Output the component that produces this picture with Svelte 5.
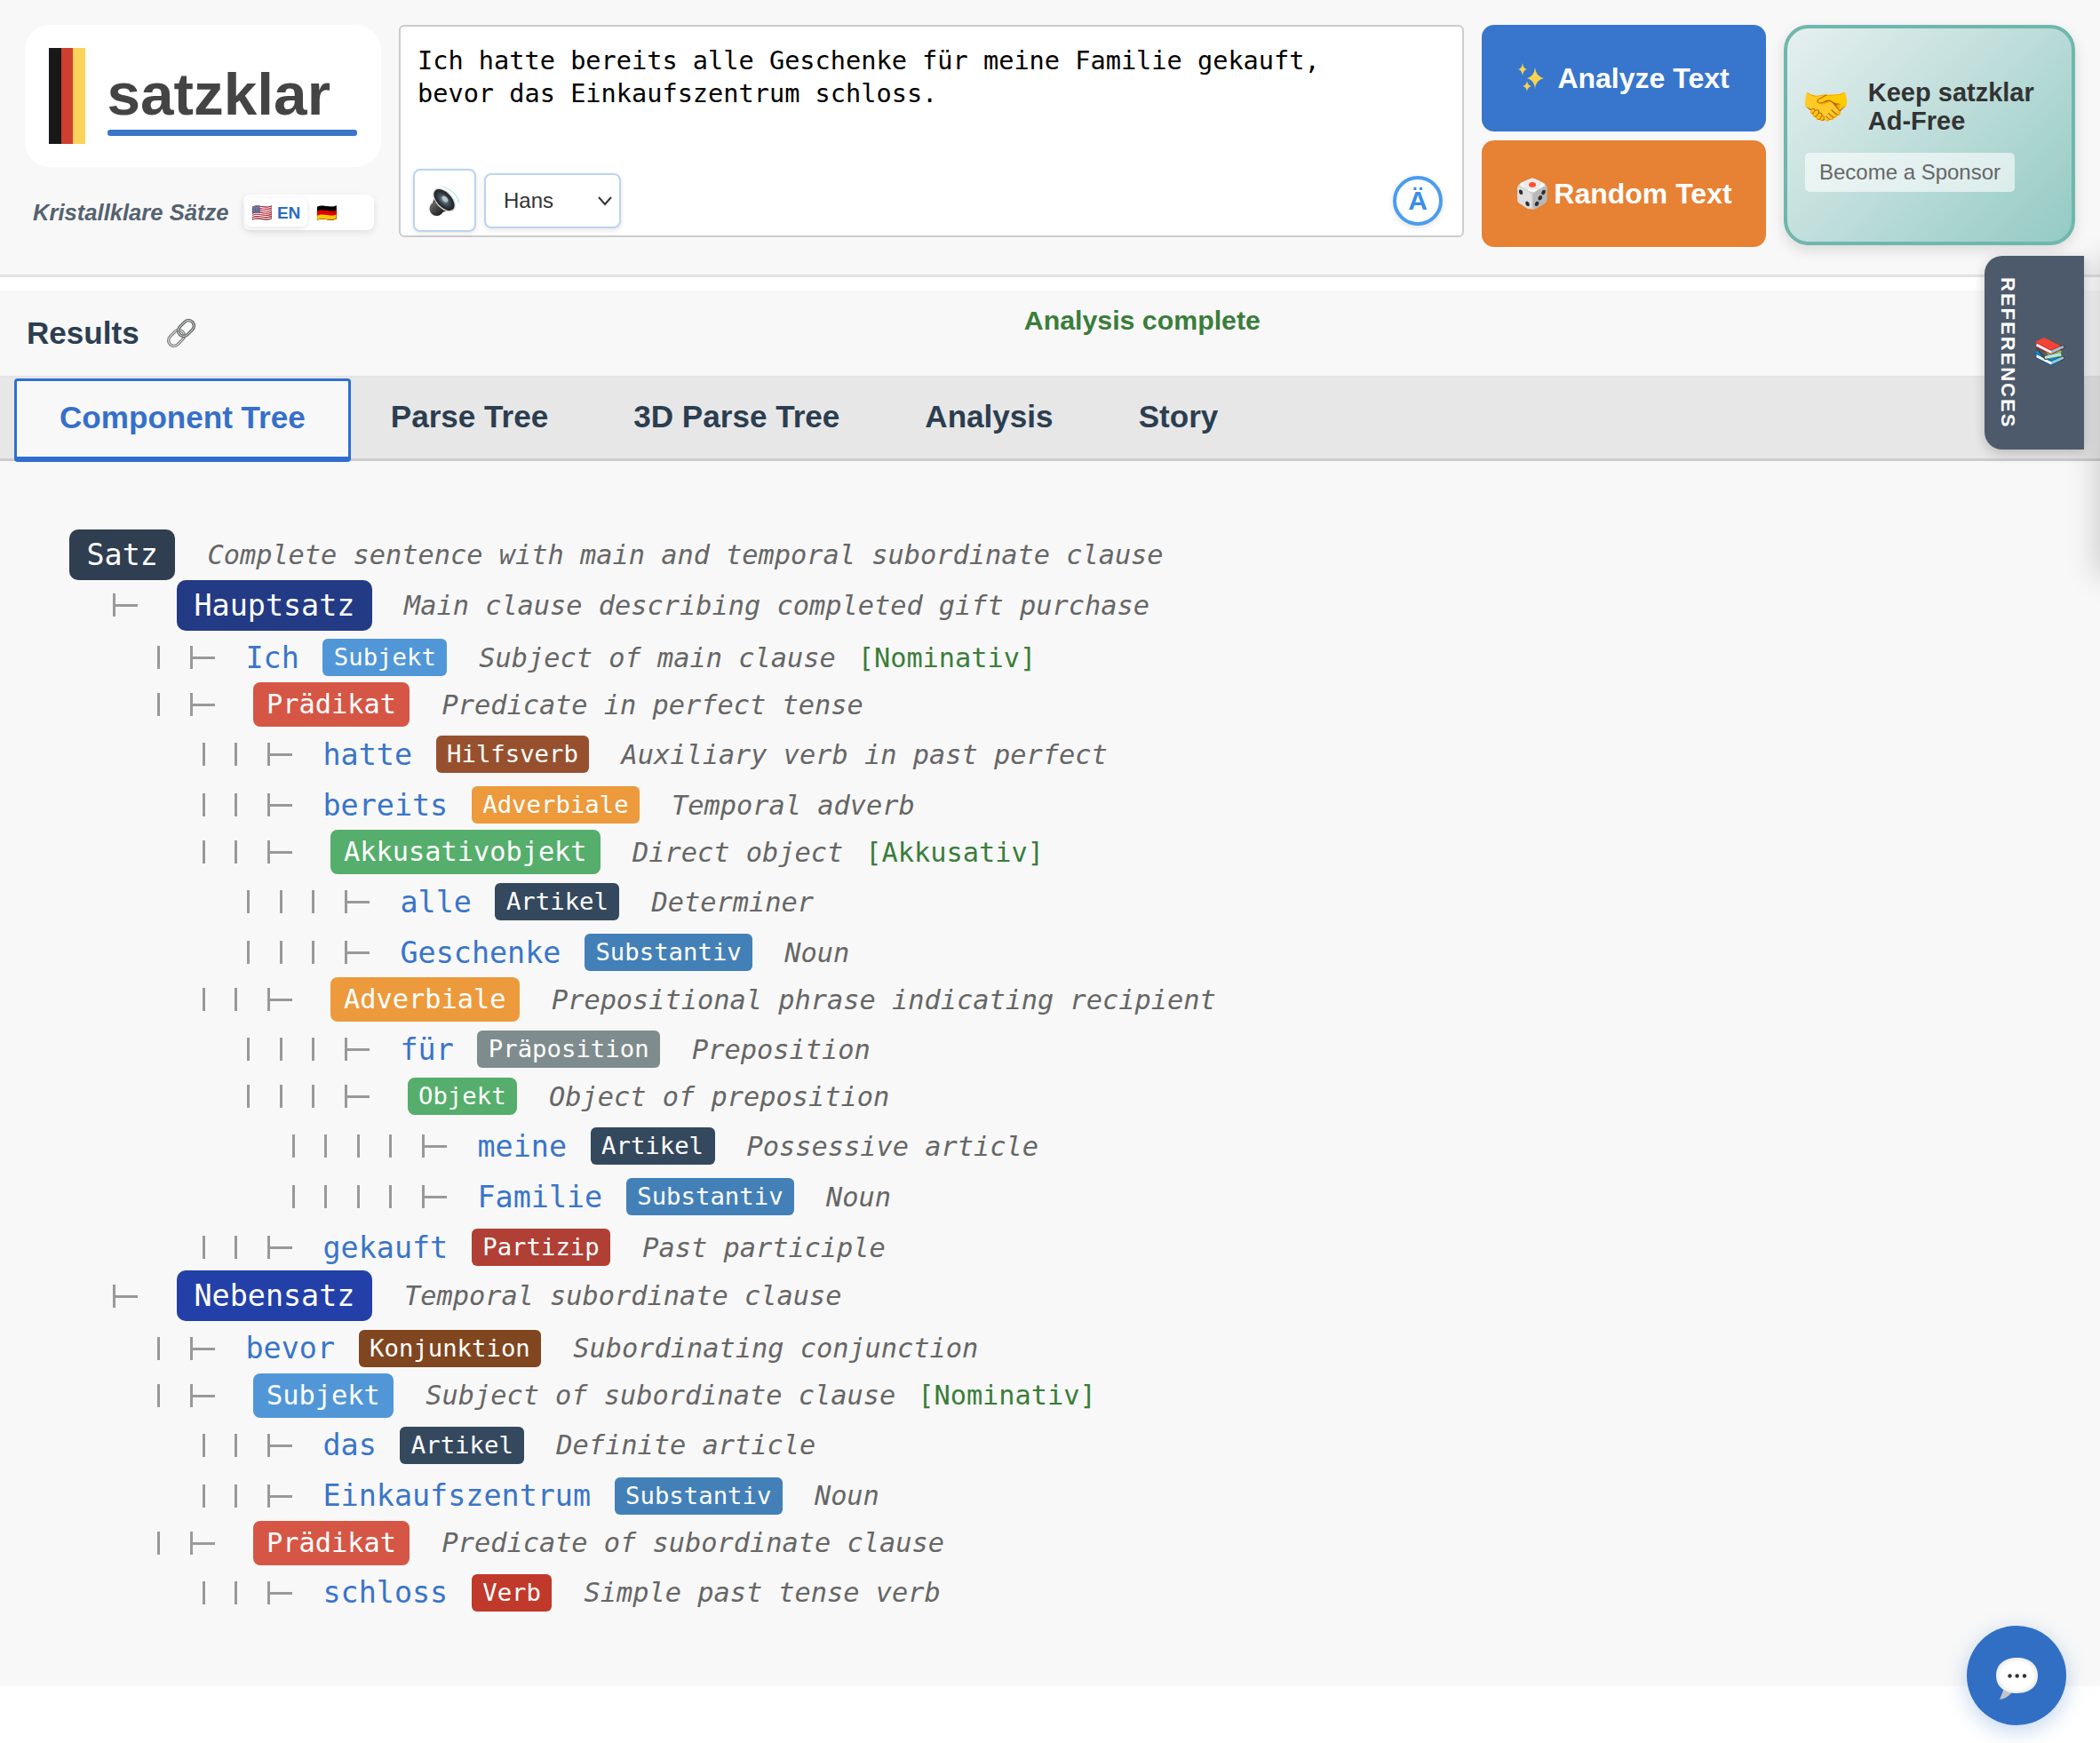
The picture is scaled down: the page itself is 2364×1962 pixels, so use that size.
<script>
  const rows = [
    { d: 0, kind: "big", badge: "Satz", color: "satz", desc: "Complete sentence with main and temporal subordinate clause" },
    { d: 1, kind: "big", badge: "Hauptsatz", color: "haupt", desc: "Main clause describing completed gift purchase" },
    { d: 2, word: "Ich", badge: "Subjekt", color: "subj", desc: "Subject of main clause", tag: "[Nominativ]" },
    { d: 2, kind: "phrase", badge: "Prädikat", color: "praed", desc: "Predicate in perfect tense" },
    { d: 3, word: "hatte", badge: "Hilfsverb", color: "hilf", desc: "Auxiliary verb in past perfect" },
    { d: 3, word: "bereits", badge: "Adverbiale", color: "adv", desc: "Temporal adverb" },
    { d: 3, kind: "phrase", badge: "Akkusativobjekt", color: "obj", desc: "Direct object", tag: "[Akkusativ]" },
    { d: 4, word: "alle", badge: "Artikel", color: "art", desc: "Determiner" },
    { d: 4, word: "Geschenke", badge: "Substantiv", color: "subst", desc: "Noun" },
    { d: 3, kind: "phrase", badge: "Adverbiale", color: "adv", desc: "Prepositional phrase indicating recipient" },
    { d: 4, word: "für", badge: "Präposition", color: "prep", desc: "Preposition" },
    { d: 4, kind: "phrase", small: true, badge: "Objekt", color: "obj", desc: "Object of preposition" },
    { d: 5, word: "meine", badge: "Artikel", color: "art", desc: "Possessive article" },
    { d: 5, word: "Familie", badge: "Substantiv", color: "subst", desc: "Noun" },
    { d: 3, word: "gekauft", badge: "Partizip", color: "part", desc: "Past participle" },
    { d: 1, kind: "big", badge: "Nebensatz", color: "neben", desc: "Temporal subordinate clause" },
    { d: 2, word: "bevor", badge: "Konjunktion", color: "konj", desc: "Subordinating conjunction" },
    { d: 2, kind: "phrase", badge: "Subjekt", color: "subj", desc: "Subject of subordinate clause", tag: "[Nominativ]" },
    { d: 3, word: "das", badge: "Artikel", color: "art", desc: "Definite article" },
    { d: 3, word: "Einkaufszentrum", badge: "Substantiv", color: "subst", desc: "Noun" },
    { d: 2, kind: "phrase", badge: "Prädikat", color: "praed", desc: "Predicate of subordinate clause" },
    { d: 3, word: "schloss", badge: "Verb", color: "verb", desc: "Simple past tense verb" },
  ];

  const tabs = ["Component Tree", "Parse Tree", "3D Parse Tree", "Analysis", "Story"];
  let activeTab = $state(0);
  let text = $state("Ich hatte bereits alle Geschenke für meine Familie gekauft,\nbevor das Einkaufszentrum schloss.");
  let voice = $state("Hans");
</script>

<div class="page">
  <header class="top">
    <div class="brand">
      <div class="logo">
        <div class="flag"><i class="black"></i><i class="red"></i><i class="gold"></i></div>
        <div class="wordmark">
          <span>satzklar</span>
          <div class="underline"></div>
        </div>
      </div>
      <div class="brand-row">
        <span class="tagline">Kristallklare Sätze</span>
        <div class="lang">
          <button class="lang-btn active"><span class="emoji">🇺🇸</span> EN</button>
          <button class="lang-btn"><span class="emoji">🇩🇪</span></button>
        </div>
      </div>
    </div>

    <div class="input-box">
      <textarea bind:value={text} spellcheck="false"></textarea>
      <div class="tools">
        <button class="speak" aria-label="Read aloud">
          <svg width="36" height="36" viewBox="0 0 36 36">
            <defs>
              <linearGradient id="magnet" x1="0" y1="0" x2="1" y2="1">
                <stop offset="0" stop-color="#777" />
                <stop offset="1" stop-color="#111" />
              </linearGradient>
              <radialGradient id="dish">
                <stop offset="0" stop-color="#8fa6b2" />
                <stop offset="0.55" stop-color="#39444c" />
                <stop offset="1" stop-color="#1c1f22" />
              </radialGradient>
            </defs>
            <path d="M16 2.5q9 2.5 14.5 9.5 3 4 2.5 8" fill="none" stroke="#a8e4ef" stroke-width="1" />
            <path d="M12.5 1q11 3 18 12 3.5 4.5 4 9" fill="none" stroke="#c4eef5" stroke-width="0.8" />
            <path d="M4 20 9 8 25 27 13 32Z" fill="#3a3d40" />
            <circle cx="8.5" cy="27" r="8" fill="url(#magnet)" />
            <ellipse cx="17" cy="17" rx="16" ry="9.5" transform="rotate(47 17 17)" fill="#d5d8da" />
            <ellipse cx="17" cy="17" rx="14.5" ry="8.2" transform="rotate(47 17 17)" fill="url(#dish)" />
            <ellipse cx="18" cy="16" rx="4" ry="2.6" transform="rotate(47 18 16)" fill="#b7c7cf" />
          </svg>
        </button>
        <select bind:value={voice}>
          <option>Hans</option>
          <option>Marlene</option>
        </select>
        <button class="umlaut">Ä</button>
      </div>
    </div>

    <div class="actions">
      <button class="action analyze">
        <svg width="32" height="36" viewBox="0 0 32 36">
          <g fill="#fbd24e">
            <path d="M21 6q1 10 10 12-9 2-10 12-1-10-9-12 8-2 9-12Z" />
            <path d="M7 1q.6 6 5 7-4.4 1-5 7-.6-6-5-7 4.4-1 5-7Z" />
            <path d="M12 21q.5 5 5 6-4.500 1-5 6-.5-5-5-6 4.500-1 5-6Z" />
          </g>
        </svg>
        <span>Analyze Text</span>
      </button>
      <button class="action random"><span class="emoji">🎲</span><span>Random Text</span></button>
    </div>

    <div class="sponsor">
      <div class="sponsor-head">
        <span class="emoji shake">🤝</span>
        <strong>Keep satzklar<br />Ad-Free</strong>
      </div>
      <button class="sponsor-btn">Become a Sponsor</button>
    </div>
  </header>

  <main>
    <div class="results-head">
      <div class="results-title">
        Results
        <svg class="link" width="40" height="40" viewBox="0 0 36 36">
          <g fill="none" transform="rotate(-45 18 18)">
            <rect x="2" y="12.500" width="18" height="11" rx="5.500" stroke="#777" stroke-width="3" />
            <rect x="2" y="12.500" width="18" height="11" rx="5.500" stroke="#dfe3e6" stroke-width="1" />
            <rect x="16" y="12.500" width="18" height="11" rx="5.500" stroke="#555" stroke-width="3" />
            <rect x="16" y="12.500" width="18" height="11" rx="5.500" stroke="#d3d6d8" stroke-width="1" />
          </g>
        </svg>
      </div>
      <div class="status">Analysis complete</div>
    </div>

    <nav class="tabs">
      {#each tabs as tab, i}
        <button class="tab" class:active={activeTab === i} onclick={() => (activeTab = i)}>{tab}</button>
      {/each}
    </nav>

    <div class="tree">
      {#each rows as row}
        <div class="row {row.kind || 'word'}" style={row.d ? `padding-left: ${118.5 + 50.5 * (row.d - 1)}px` : "padding-left: 78px"}>
          {#if row.d}
            {#each Array(row.d - 1) as _}<span class="guide bar"></span>{/each}
            <span class="guide tee"></span>
            <span class="guide"></span>
          {/if}
          {#if row.word}<span class="token">{row.word}</span>{/if}
          <span class="badge {row.color}" class:small={row.small}>{row.badge}</span>
          <span class="desc">{row.desc}</span>
          {#if row.tag}<span class="case">{row.tag}</span>{/if}
        </div>
      {/each}
    </div>
  </main>

  <div class="drawer"></div>
  <button class="refs"><span class="emoji">📚</span><span>REFERENCES</span></button>
  <button class="chat" aria-label="Chat">
    <svg width="47" height="48" viewBox="0 0 47 48">
      <defs>
        <radialGradient id="bubble" r="0.62">
          <stop offset="0.6" stop-color="#fff" />
          <stop offset="0.88" stop-color="#e6e6e6" />
          <stop offset="1" stop-color="#a9a9a9" />
        </radialGradient>
      </defs>
      <path d="M10 32 4 47q8-1 14-8Z" fill="#c4c4c4" />
      <path d="M23.500 0C37 0 47 7 47 20S37 40 23.500 40 0 33 0 20 10 0 23.500 0Z" fill="url(#bubble)" />
      <circle cx="15.500" cy="20.500" r="2.200" fill="#333" />
      <circle cx="23.700" cy="20.500" r="2.200" fill="#333" />
      <circle cx="32" cy="20.500" r="2.200" fill="#333" />
    </svg>
  </button>
</div>

<style>
  :global(body) {
    margin: 0;
    background: #fff;
    font-family: "Liberation Sans", Arial, sans-serif;
  }

  button {
    font-family: inherit;
    cursor: pointer;
  }

  .emoji {
    font-family: "Noto Color Emoji", "Apple Color Emoji", sans-serif;
  }

  .page {
    position: relative;
    min-height: 1962px;
    overflow: hidden;
  }

  .top {
    display: flex;
    align-items: flex-start;
    gap: 20px;
    height: 281px;
    padding: 28px 28px 0;
    background: #f8f8f8;
    border-bottom: 3px solid #e2e2e2;
  }

  .brand {
    width: 401px;
    flex-shrink: 0;
  }

  .logo {
    display: flex;
    align-items: flex-start;
    gap: 25px;
    height: 160px;
    padding: 26px 27px 0;
    box-sizing: border-box;
    background: #fff;
    border-radius: 28px;
  }

  .flag {
    display: flex;
    height: 108px;
  }

  .flag i {
    width: 13.5px;
  }

  .black { background: #181818; }
  .red { background: #cf3f30; }
  .gold { background: #fbd25a; }

  .wordmark {
    flex: 1;
    color: #444;
    font-size: 67.5px;
    font-weight: 700;
    line-height: 1;
    padding-top: 19px;
  }

  .wordmark span {
    display: block;
    line-height: 66px;
  }

  .underline {
    height: 7px;
    margin-top: 7px;
    background: #3a75c9;
    border-radius: 3px;
  }

  .brand-row {
    display: flex;
    align-items: center;
    justify-content: space-between;
    margin-top: 31px;
    padding: 0 8px 0 9px;
  }

  .tagline {
    color: #556270;
    font-size: 25.6px;
    font-weight: 700;
    font-style: italic;
    white-space: nowrap;
  }

  .lang {
    display: flex;
    gap: 4px;
    width: 147px;
    height: 40px;
    padding: 4px 2px;
    box-sizing: border-box;
    background: #fff;
    border-radius: 8px;
    box-shadow: 0 3px 8px rgba(0, 0, 0, 0.1);
  }

  .lang-btn {
    width: 71px;
    border: 0;
    border-radius: 7px;
    background: transparent;
    color: #2b6cc4;
    font-size: 19px;
    font-weight: 700;
    white-space: nowrap;
    padding: 0 0 0 7px;
    text-align: left;
  }

  .lang-btn.active {
    background: #fff;
    box-shadow: 0 2px 6px rgba(0, 0, 0, 0.1);
  }

  .input-box {
    display: flex;
    flex-direction: column;
    flex: 1;
    height: 239px;
    box-sizing: border-box;
    background: #fff;
    border: 2px solid #ccc;
    border-radius: 6px;
  }

  textarea {
    flex: 1;
    min-height: 0;
    padding: 19.5px 19px 0;
    border: 0;
    outline: 0;
    resize: none;
    background: transparent;
    color: #000;
    font-family: "DejaVu Sans Mono", monospace;
    font-size: 28.6px;
    line-height: 37.5px;
  }

  .tools {
    display: flex;
    align-items: center;
    gap: 9px;
    height: 71px;
    padding: 0 22px 4px 14px;
  }

  .speak {
    display: flex;
    align-items: center;
    justify-content: center;
    width: 71px;
    height: 71px;
    padding: 0;
    background: #fff;
    border: 2px solid #bcd4f0;
    border-radius: 8px;
    box-shadow: 0 2px 6px rgba(0, 0, 0, 0.1);
  }

  select {
    width: 154px;
    height: 62px;
    padding: 0 20px;
    appearance: none;
    background: #fff url("data:image/svg+xml,%3Csvg xmlns='http://www.w3.org/2000/svg' width='18' height='12'%3E%3Cpath d='M2 2l7 8 7-8' fill='none' stroke='%23333' stroke-width='2'/%3E%3C/svg%3E") no-repeat right 7px center;
    border: 2px solid #bcd4f0;
    border-radius: 8px;
    box-shadow: 0 2px 6px rgba(0, 0, 0, 0.1);
    color: #333;
    font-family: inherit;
    font-size: 24px;
  }

  .umlaut {
    width: 56px;
    height: 56px;
    margin-left: auto;
    padding: 0;
    background: #fff;
    border: 4px solid #4a9df0;
    border-radius: 50%;
    box-shadow: 0 2px 6px rgba(0, 0, 0, 0.12);
    color: #3a8ee6;
    font-size: 30px;
    font-weight: 700;
  }

  .actions {
    display: flex;
    flex-direction: column;
    gap: 10px;
    width: 320px;
    flex-shrink: 0;
  }

  .action {
    display: flex;
    align-items: center;
    justify-content: center;
    height: 120px;
    border: 0;
    border-radius: 14px;
    color: #fff;
    font-size: 32px;
    font-weight: 700;
  }

  .analyze { background: #3776cc; gap: 14px; padding-right: 8px; }
  .random { background: #e78133; gap: 4px; padding-right: 7px; }

  .sponsor {
    width: 328px;
    height: 248px;
    flex-shrink: 0;
    box-sizing: border-box;
    padding: 56px 20px 0;
    background: linear-gradient(135deg, #e6f0ef, #94cac4);
    border: 4px solid #6fb7ac;
    border-radius: 28px;
    box-shadow: 0 6px 16px rgba(0, 0, 0, 0.12);
  }

  .sponsor-head {
    display: flex;
    align-items: center;
    gap: 20px;
    color: #333;
    font-size: 29px;
    line-height: 32px;
  }

  .shake {
    margin-left: -4px;
    font-size: 44px;
  }

  .sponsor-btn {
    display: block;
    width: 236px;
    height: 44px;
    margin-top: 20px;
    padding: 0;
    background: rgba(255, 255, 255, 0.6);
    border: 0;
    border-radius: 5px;
    color: #666;
    font-size: 24px;
  }

  main {
    margin-top: 15px;
    background: #f8f8f8;
  }

  .results-head {
    display: flex;
    height: 96px;
    border-bottom: 2px solid #e5e5e5;
  }

  .results-title {
    display: flex;
    align-items: center;
    gap: 27px;
    height: 40px;
    margin: 28px 0 0 30px;
    color: #2c3e50;
    font-size: 35.1px;
    font-weight: 700;
    white-space: nowrap;
  }

  .status {
    flex: 1;
    margin-top: 15px;
    padding-right: 16px;
    text-align: center;
    color: #3a7d3a;
    font-size: 30.3px;
    font-weight: 700;
    line-height: 38px;
  }

  .tabs {
    display: flex;
    align-items: flex-start;
    height: 91px;
    padding-left: 16px;
    background: #e7e7e7;
    border-bottom: 3px solid #ccc;
  }

  .tab {
    height: 91px;
    padding: 0 48px 3px;
    background: transparent;
    border: 0;
    color: #2c3e50;
    font-size: 35.1px;
    font-weight: 700;
  }

  .tab.active {
    height: 94px;
    margin-top: 1px;
    margin-right: -3px;
    padding-bottom: 3px;
    border: 3px solid #2f6fd0;
    border-bottom-width: 6px;
    border-radius: 4px;
    background: #f8f8f8;
    color: #3570c9;
  }

  .tree {
    padding: 79.5px 0 77px;
    font-family: "DejaVu Sans Mono", monospace;
    font-size: 30.3px;
  }

  .row {
    display: flex;
    align-items: center;
    white-space: pre;
  }

  .word { height: 57px; }
  .phrase { height: 49px; padding-bottom: 3px; }
  .big { height: 49px; padding-top: 1.5px; padding-bottom: 6px; }

  .guide {
    width: 36.5px;
    height: 26px;
    flex-shrink: 0;
  }

  .bar {
    background: linear-gradient(#999, #999) 8px 0 / 3px 26px no-repeat;
  }

  .tee {
    background:
      linear-gradient(#999, #999) 8px 0 / 3px 26px no-repeat,
      linear-gradient(#999, #999) 8px 12px / 29px 3px no-repeat;
  }

  .token {
    margin: 0 26.5px 0 -2px;
    color: #3a75c9;
    font-size: 33.4px;
  }

  .badge {
    height: 42px;
    padding: 0 12.5px;
    border-radius: 6px;
    color: #fff;
    font-size: 27.3px;
    line-height: 42px;
  }

  .phrase .badge {
    height: 50px;
    margin-left: 6px;
    padding: 0 15.5px;
    border-radius: 8px;
    font-size: 30.3px;
    line-height: 50px;
  }

  .phrase .badge.small {
    height: 42px;
    margin-left: 6px;
    padding: 0 12.5px;
    font-size: 27.3px;
    line-height: 42px;
  }

  .big .badge {
    height: 57px;
    margin-left: 7.5px;
    padding: 0 19.5px;
    border-radius: 10px;
    font-size: 33.4px;
    line-height: 57px;
  }

  .desc {
    margin-left: 36px;
    color: #666;
    font-style: italic;
  }

  .case {
    margin-left: 25px;
    color: #3a7d3a;
  }

  .big .satz { background: #2f3e50; margin-left: 0; }
  .haupt { background: #233a85; }
  .neben { background: #2340a8; }
  .subj { background: #5197d8; }
  .praed { background: #d65645; }
  .hilf { background: #97502e; }
  .adv { background: #ec9a3c; }
  .obj { background: #55ae6b; }
  .art { background: #34495e; }
  .subst { background: #4480b8; }
  .prep { background: #7f8c8d; }
  .part { background: #b04035; }
  .konj { background: #80461f; }
  .verb { background: #c0392b; }

  .drawer {
    position: absolute;
    top: 290px;
    left: 2364px;
    width: 300px;
    height: 360px;
    box-shadow: -6px 0 30px rgba(0, 0, 0, 0.16);
  }

  .refs {
    position: absolute;
    top: 288px;
    left: 2234px;
    display: flex;
    flex-direction: column;
    align-items: center;
    justify-content: center;
    gap: 18px;
    width: 112px;
    height: 218px;
    padding: 0 7px 0 0;
    writing-mode: vertical-rl;
    background: #4d5a6b;
    border: 0;
    border-radius: 20px 0 0 20px;
    box-shadow: 0 4px 14px rgba(0, 0, 0, 0.2);
    color: #fff;
    font-size: 22px;
    font-weight: 700;
    letter-spacing: 2px;
  }

  .refs .emoji {
    font-size: 30px;
  }

  .chat {
    position: absolute;
    left: 2214px;
    top: 1830px;
    display: flex;
    align-items: center;
    justify-content: center;
    width: 112px;
    height: 112px;
    padding: 8px 0 0;
    background: #316fc4;
    border: 0;
    border-radius: 50%;
    box-shadow: 0 6px 24px rgba(49, 111, 196, 0.3);
  }
</style>
